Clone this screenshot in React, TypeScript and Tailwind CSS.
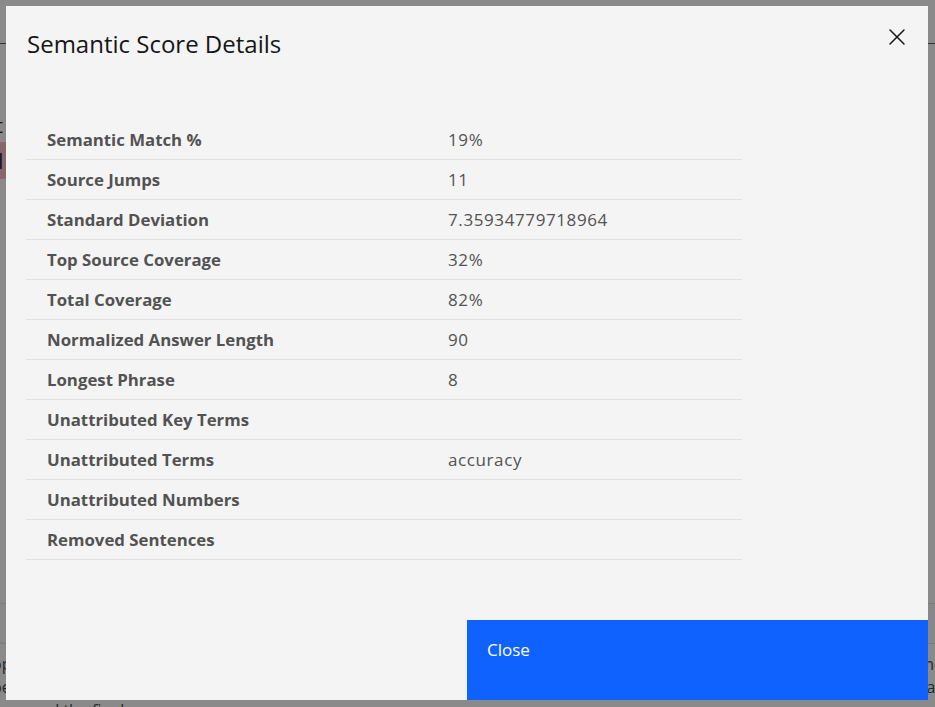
import { X } from 'lucide-react';

const rows: [string, string][] = [
    ['Semantic Match %', '19%'],
    ['Source Jumps', '11'],
    ['Standard Deviation', '7.35934779718964'],
    ['Top Source Coverage', '32%'],
    ['Total Coverage', '82%'],
    ['Normalized Answer Length', '90'],
    ['Longest Phrase', '8'],
    ['Unattributed Key Terms', ''],
    ['Unattributed Terms', 'accuracy'],
    ['Unattributed Numbers', ''],
    ['Removed Sentences', ''],
];

const font = { fontFamily: '"Open Sans", "Noto Sans", sans-serif' };

function Page() {
    return (
        <div className="w-[935px] h-[707px] overflow-hidden bg-white text-[#161616]" style={font}>
            <div className="h-[44px] border-b border-[#525252]" />
            <div className="flex flex-col pt-[66px]">
                <div className="h-[32px] text-[20px] leading-[32px] -ml-[33px]">text</div>
                <div className="h-[37px] w-[6px] bg-[#ffb8c6] text-[22px] leading-[37px] overflow-hidden">
                    <span className="block -ml-[2px]">l</span>
                </div>
            </div>
            <div className="mt-[424px] h-[41px] border-y border-[#e0e0e0] bg-[#fafafa]" />
            <div className="flex flex-col pt-[9px] text-[16px] leading-[23px] text-[#393939]">
                <div className="flex justify-between -mx-[8px]">
                    <span>op</span>
                    <span>ne</span>
                </div>
                <div className="flex justify-between -mx-[8px]">
                    <span>be</span>
                    <span>as</span>
                </div>
                <div>rpassed the final score</div>
            </div>
        </div>
    );
}

export default function App() {
    return (
        <div className="relative w-[935px] h-[707px] overflow-hidden">
            <Page />
            <div className="absolute inset-0 bg-[#161616]/50 pl-[6px] pt-[6px]">
                <div className="w-[922px] h-[694px] bg-[#f4f4f4] flex flex-col" style={font}>
                    <div className="flex items-start justify-between pl-[21px] pr-[17px] pt-[23px]">
                        <h2 className="text-[24px] leading-[30px] text-[#161616] font-normal">Semantic Score Details</h2>
                        <button className="-mt-[6px] text-[#161616]">
                            <X size={28} strokeWidth={1.25} />
                        </button>
                    </div>
                    <div className="mt-[61px] ml-[20px] w-[716px] flex flex-col">
                        {rows.map(([label, value]) => (
                            <div
                                key={label}
                                className="grid grid-cols-[401px_1fr] h-[40px] items-center border-b border-[#e0e0e0] text-[#525252]"
                            >
                                <div className="pl-[21px] font-bold text-[16.8px]">{label}</div>
                                <div className="pl-[21px] text-[17px] tracking-[0.6px]">{value}</div>
                            </div>
                        ))}
                    </div>
                    <div className="flex-1" />
                    <div className="flex justify-end">
                        <button className="w-[461px] h-[80px] bg-[#0f62fe] text-white text-[17px] text-left pl-[20px] pt-[17px] flex items-start">
                            Close
                        </button>
                    </div>
                </div>
            </div>
        </div>
    );
}
